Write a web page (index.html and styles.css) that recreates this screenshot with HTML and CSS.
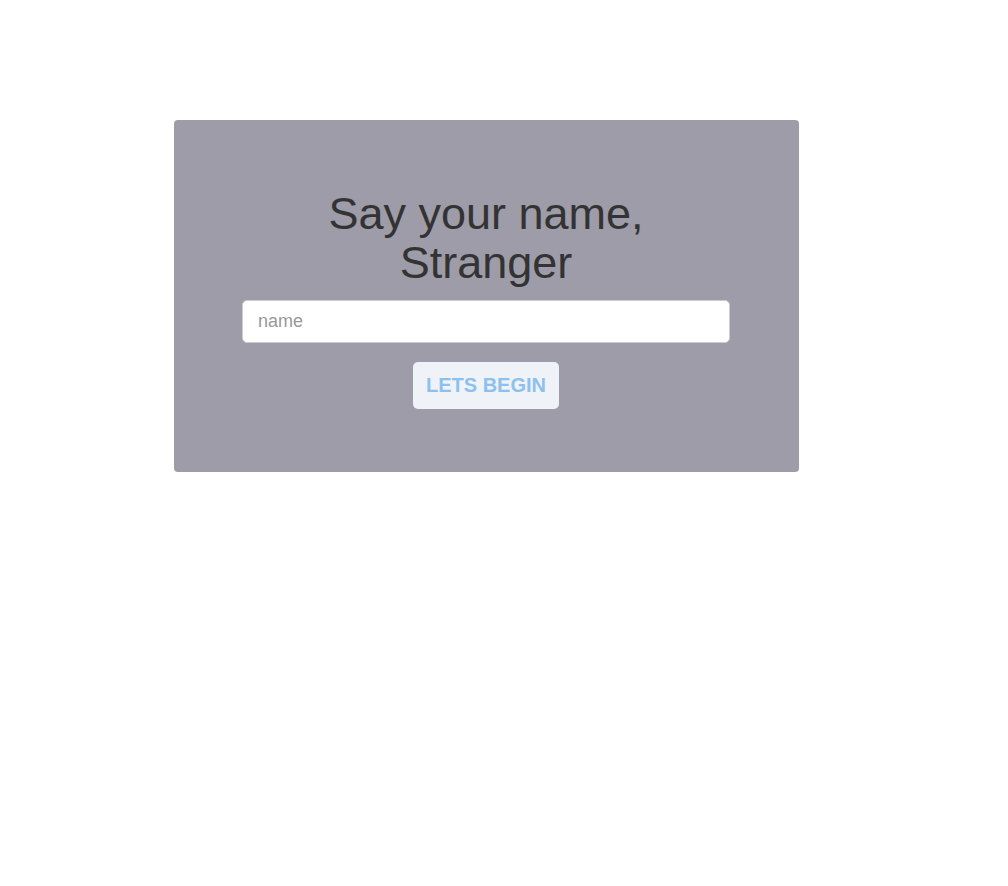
FILE: index.html
```html
<!DOCTYPE html>
<html>
<head>
<meta charset="utf-8">
<link rel="stylesheet" href="styles.css">
</head>
<body>
<div class="card">
  <div class="inner">
    <h1 class="title">Say your name, Stranger</h1>
    <input class="name-input" type="text" placeholder="name">
    <button class="begin-btn">LETS BEGIN</button>
  </div>
</div>
</body>
</html>
```
FILE: styles.css
```css
html, body {
  margin: 0;
  padding: 0;
  background: #ffffff;
  font-family: "Liberation Sans", Arial, sans-serif;
}
.card {
  box-sizing: border-box;
  width: 625px;
  height: 352px;
  margin: 120px 0 0 174px;
  background: #9d9ca8;
  border-radius: 4px;
  padding: 69px 68px 0 68px;
}
.inner {
  width: 488px;
  display: flex;
  flex-direction: column;
  align-items: center;
}
.title {
  margin: 0 0 13px 0;
  font-size: 45px;
  font-weight: normal;
  line-height: 49px;
  color: #333333;
  text-align: center;
}
.name-input {
  box-sizing: border-box;
  width: 488px;
  height: 43px;
  margin: 0;
  padding: 0 15px;
  border: 1px solid #cccccc;
  border-radius: 5px;
  background: #ffffff;
  font-family: "Liberation Sans", Arial, sans-serif;
  font-size: 18px;
  color: #555;
  outline: none;
}
.name-input::placeholder {
  color: #999999;
}
.begin-btn {
  box-sizing: border-box;
  margin-top: 19px;
  width: 146px;
  height: 47px;
  border: none;
  border-radius: 5px;
  background: #eff3f8;
  color: #8ec0ee;
  font-family: "Liberation Sans", Arial, sans-serif;
  font-weight: bold;
  font-size: 20px;
  padding: 0;
}
```
